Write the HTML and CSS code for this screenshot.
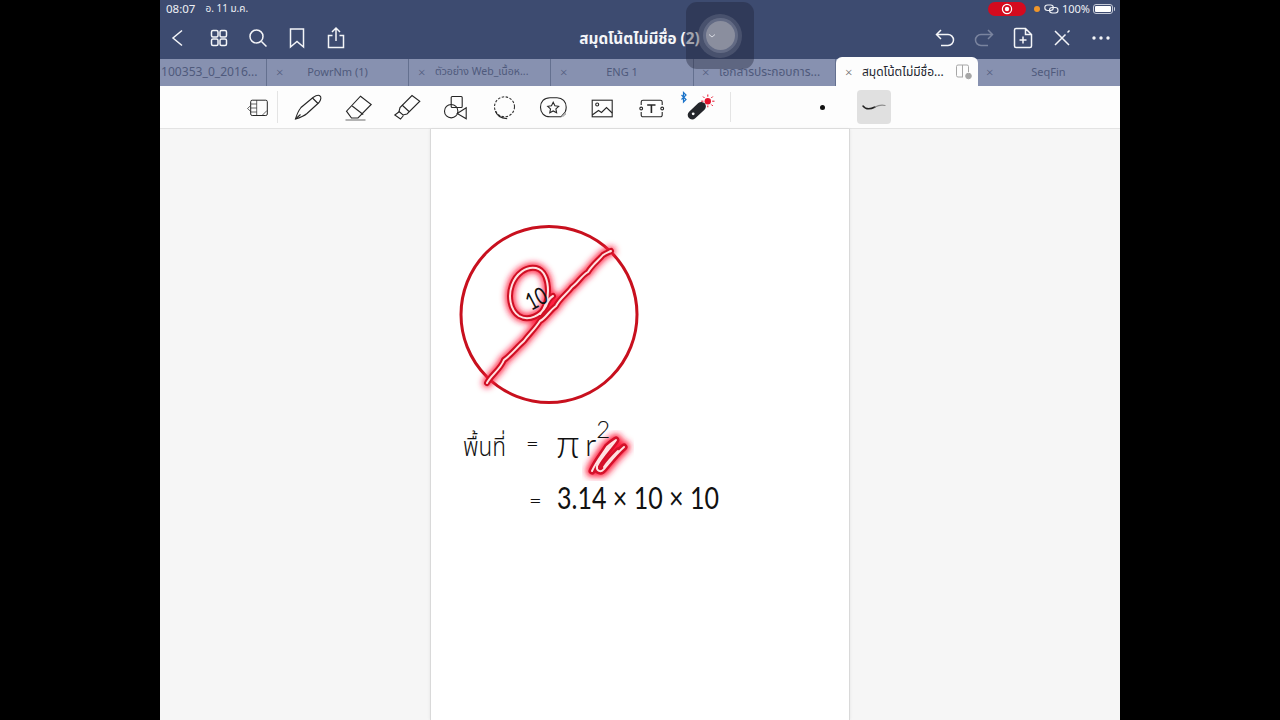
FILE: index.html
```html
<!DOCTYPE html>
<html lang="th">
<head>
<meta charset="utf-8">
<title>สมุดโน้ตไม่มีชื่อ (2)</title>
<link rel="stylesheet" href="styles.css">
</head>
<body>
<div class="app">
  <header class="header">
    <div class="status">
      <span class="time">08:07</span>
      <span class="date">อ. 11 ม.ค.</span>
      <span class="status-right">
        <span class="rec"><svg width="12" height="12" viewBox="0 0 12 12"><circle cx="6" cy="6" r="4.6" class="rec-ring"/><circle cx="6" cy="6" r="2.2" class="rec-dot"/></svg></span>
        <span class="orange"></span>
        <svg class="link" width="15" height="10" viewBox="0 0 15 10"><rect x="0.8" y="1" width="8.500" height="5.500" rx="2.700"/><rect x="5.500" y="3.500" width="8.500" height="5.500" rx="2.700"/></svg>
        <span class="pct">100%</span>
        <span class="battery"><span class="battery-fill"></span></span>
      </span>
    </div>
    <nav class="nav">
      <div class="nav-group">
        <button class="nav-btn"><svg viewBox="0 0 24 24"><path d="M14 4.500 5 12l9 7.500"/></svg></button>
        <button class="nav-btn"><svg viewBox="0 0 24 24"><rect x="4.500" y="4.500" width="6.500" height="6.500" rx="1.500"/><rect x="13" y="4.500" width="6.500" height="6.500" rx="1.500"/><rect x="4.500" y="13" width="6.500" height="6.500" rx="1.500"/><rect x="13" y="13" width="6.500" height="6.500" rx="1.500"/></svg></button>
        <button class="nav-btn"><svg viewBox="0 0 24 24"><circle cx="10.500" cy="10.500" r="6.500"/><path d="m15.500 15.500 5 5"/></svg></button>
        <button class="nav-btn"><svg viewBox="0 0 24 24"><path d="M5.500 3h13v18L12 15.500 5.500 21z"/></svg></button>
        <button class="nav-btn"><svg viewBox="0 0 24 24"><path d="M8.500 9.500H4.500v12h15v-12h-4M12 15V2.500M8 6l4-4 4 4"/></svg></button>
      </div>
      <h1 class="title">สมุดโน้ตไม่มีชื่อ (2)</h1>
      <div class="nav-group">
        <button class="nav-btn"><svg viewBox="0 0 24 24"><path d="M8 4 3.500 8.500 8 13M3.500 8.500H15a5.500 5.500 0 0 1 0 11H8"/></svg></button>
        <button class="nav-btn dim"><svg viewBox="0 0 24 24"><path d="M16 4l4.500 4.500L16 13M20.500 8.500H9a5.500 5.500 0 0 0 0 11h7"/></svg></button>
        <button class="nav-btn"><svg viewBox="0 0 24 24"><path d="M14.500 2.500H5a1.500 1.500 0 0 0-1.500 1.500v16A1.500 1.500 0 0 0 5 21.500h14a1.500 1.500 0 0 0 1.500-1.500V8.500zM14.500 2.500v6h6M12 10.500v7M8.500 14h7"/></svg></button>
        <button class="nav-btn"><svg viewBox="0 0 24 24"><path d="m5 5 14 14M5 19 15.500 8.500M17.500 6.500 19.500 4.500"/></svg></button>
        <button class="nav-btn"><svg viewBox="0 0 24 24"><circle cx="5" cy="12" r="1.700" class="fill"/><circle cx="12" cy="12" r="1.700" class="fill"/><circle cx="19" cy="12" r="1.700" class="fill"/></svg></button>
      </div>
    </nav>
  </header>

  <div class="tabs">
    <div class="tab tab-first"><span class="tab-label">100353_0_2016...</span></div>
    <div class="tab"><span class="x">×</span><span class="tab-label">PowrNm (1)</span></div>
    <div class="tab tab-left"><span class="x">×</span><span class="tab-label">ตัวอย่าง Web_เนื้อห...</span></div>
    <div class="tab tab-wide"><span class="x">×</span><span class="tab-label">ENG 1</span></div>
    <div class="tab tab-left tab-doc"><span class="x">×</span><span class="tab-label">เอกสารประกอบการ...</span></div>
    <div class="tab tab-active"><span class="x">×</span><span class="tab-label">สมุดโน้ตไม่มีชื่อ...</span>
      <svg class="split" width="18" height="16" viewBox="0 0 18 16"><path d="M8 13H3a1.500 1.500 0 0 1-1.500-1.500v-9A1.500 1.500 0 0 1 3 1h9a1.500 1.500 0 0 1 1.500 1.500V8M7.500 1v12"/><circle cx="13.500" cy="12" r="2.800" class="split-dot"/></svg>
    </div>
    <div class="tab tab-last"><span class="x">×</span><span class="tab-label">SeqFin</span></div>
  </div>

  <div class="toolbar">
    <button class="tool tool-first"><svg viewBox="0 0 24 24"><rect x="4.700" y="5.200" width="16.600" height="15.300" rx="1.500"/><path class="fine" d="M10.700 5.200v15.300M1.500 13.500l3.200-3M1.500 13.500l3.200 3M4.700 9h6M4.700 13h6M4.700 17h6M16 20.500l5-5"/></svg></button>
    <span class="divider"></span>
    <button class="tool"><svg viewBox="0 0 30 30"><path d="M1.500 27C3 22 5 18 7 15.500L19 5.500C22 3.500 25 3 26 4c1.500 1 1 4-1 6.500L13 21.500C10 24 5 26 1.500 27z"/><path d="m18.500 6 5.500 5.500M1.500 27l5-4.500"/></svg></button>
    <button class="tool"><svg viewBox="0 0 30 30"><path d="M17.500 4.200 28.200 12.500 15 26H8.500L3.500 19.200z"/><path d="m9.200 14 11 8.500"/><path class="mid" d="M2.500 28h20"/></svg></button>
    <button class="tool"><svg viewBox="0 0 30 30"><path d="M20 3.500 27.800 9.200 15 22l-4 1-4-3.500 1-4z"/><path d="M7.500 19.500 2.800 23l5.700 4 3-3.500M10 13l7 6.500"/></svg></button>
    <button class="tool"><svg viewBox="0 0 30 30"><rect x="10.200" y="4.500" width="11" height="11" rx="1"/><circle cx="10.200" cy="19.200" r="6.700"/><path d="M25.200 15.800v11L16.200 21.500z"/></svg></button>
    <button class="tool"><svg viewBox="0 0 30 30"><circle class="dash" cx="14.500" cy="14.800" r="10"/><path d="M5.500 19c1 4 5 7 11.700 7.800"/></svg></button>
    <button class="tool"><svg viewBox="0 0 30 30"><path d="M22 24.800H11C5 24.800 1.500 20.800 1.500 15.300S5 5.800 11 5.800h7c5.500 0 9.200 4 9.200 9.500 0 2-.5 3.500-1 4.700z"/><path d="m14.200 10.300 1.700 3.400 3.800.6-2.800 2.600.7 3.800-3.400-1.800-3.400 1.800.7-3.800-2.800-2.600 3.800-.6z"/><path class="gray" d="m22 24.800 5-5v2.500l-2.500 2.500z"/></svg></button>
    <button class="tool"><svg viewBox="0 0 30 30"><rect x="4.200" y="8.200" width="20" height="16.600"/><circle cx="9.200" cy="12.500" r="1.500"/><path d="m4.200 23 6.300-4.500 3 2 5-5 5.700 5.500"/></svg></button>
    <button class="tool"><svg viewBox="0 0 30 30"><path d="M4.200 13v-3a1.800 1.800 0 0 1 1.800-1.800h17.400a1.800 1.800 0 0 1 1.800 1.800v3M4.200 20v3a1.800 1.800 0 0 0 1.800 1.800h17.400a1.800 1.800 0 0 0 1.800-1.800v-3"/><path class="t" d="M10.200 13h8.300M14.400 13v8"/><circle cx="4.200" cy="16.500" r="1.400"/><circle cx="25.200" cy="16.500" r="1.400"/></svg></button>
    <button class="tool tool-laser"><svg viewBox="0 0 30 30"><path class="bt" d="m-4.500 3 4.500 4.500L-2.500 10V.5L0 3-4.500 7.500"/><rect class="laser" x="0" y="14.200" width="21.600" height="9" rx="4.500" transform="rotate(-43 10.800 18.700)"/><circle cx="7.200" cy="21.800" r="1.400" class="white-solid"/><circle class="red" cx="21.800" cy="9.200" r="3.200"/><path class="rays" d="M21.800 2.500v2.200M21.800 13.500v1.800M15.200 9.200h2.200M26.200 9.200h2.300M17 4.500l1.500 1.500M26.800 4.500l-1.500 1.500M26.800 14l-1.500-1.500"/></svg></button>
    <span class="divider divider-2"></span>
    <span class="dot"></span>
    <span class="pen-box"><svg width="26" height="14" viewBox="0 0 26 14"><path class="pen-line" d="M2 6c3 4 8 3 12 1"/><path class="pen-tail" d="M14 7c3-1.500 6-2.500 10-1.500"/></svg></span>
  </div>

  <main class="canvas">
    <section class="page">
      <svg class="ink" viewBox="431 129 418 591">
        <defs>
          <filter id="glow" x="-30%" y="-30%" width="160%" height="160%"><feGaussianBlur stdDeviation="3"/></filter>
          <g id="neon-strokes">
            <path d="M487 383c4-8 13-13 17-23 8-6 13-13 20-19 5-7 11-12 16-20 6-3 9-10 16-15 4-8 11-12 16-19 6-4 9-11 16-15 4-7 11-12 15-17 3-2 6-3 8-4"/>
            <path d="M553 296c-4 2-5 5-7 10-5 9-17 16-27 10-9-6-11-20-7-31 4-11 14-19 24-17 9 2 12 13 12 23 0 8-2 16-8 23"/>
          </g>
          <g id="scribble">
            <path d="M592 471c4-9 10-16 15-24 3-3 6-5 9-7-6 9-14 16-19 26-1 5 4 7 7 3 6-7 12-15 20-22"/>
            <path d="M597 463c5-7 8-12 13-17M604 467c4-6 9-11 14-16"/>
          </g>
        </defs>
        <circle class="ring" cx="549" cy="314.500" r="88"/>
        <use href="#neon-strokes" class="neon-glow" filter="url(#glow)"/>
        <use href="#scribble" class="scribble-glow" filter="url(#glow)"/>
        <use href="#neon-strokes" class="neon-mid"/>
        <use href="#scribble" class="scribble-mid"/>
        <use href="#neon-strokes" class="neon-core"/>
        <use href="#scribble" class="neon-core"/>
        <g>
          <text class="hw hw-10" transform="translate(531 311) rotate(-28)" textLength="21" lengthAdjust="spacingAndGlyphs">10</text>
          <text class="hw hw-area" x="463" y="456" textLength="43" lengthAdjust="spacingAndGlyphs">พื้นที่</text>
          <text class="hw hw-eq" x="526" y="451">=</text>
          <text class="hw hw-pi" x="556" y="458">π</text>
          <text class="hw hw-r" x="585" y="456">r<tspan class="hw-sq" dy="-18">2</tspan></text>
          <text class="hw hw-eq" x="529" y="508">=</text>
          <text class="hw hw-calc" x="557" y="509" textLength="162" lengthAdjust="spacingAndGlyphs">3.14 × 10 × 10</text>
        </g>
      </svg>
    </section>
  </main>

  <div class="float-btn"><span class="float-halo"><span class="float-core"><svg class="float-chev" width="8" height="6" viewBox="0 0 8 6"><path d="m1 1.500 3 2.500 3-2.500"/></svg></span></span></div>
</div>
</body>
</html>
```
FILE: styles.css
```css
* { box-sizing: border-box; }
html, body { margin: 0; height: 100%; background: #000; overflow: hidden; }
body { font-family: "Noto Sans", "Noto Sans Thai", "Liberation Sans", sans-serif; }
.app { position: relative; width: 960px; height: 720px; margin: 0 auto; background: #f6f6f6; display: flex; flex-direction: column; overflow: hidden; }

.header { background: #3d4b70; color: #fff; height: 59px; flex: none; }
.status { height: 17px; display: flex; align-items: center; padding: 0 7px 0 6px; font-size: 11.500px; color: #eef0f5; }
.date { margin-left: 10px; font-size: 10px; }
.status-right { margin-left: auto; display: flex; align-items: center; }
.rec { width: 38px; height: 14px; border-radius: 7px; background: #d40a1e; display: flex; align-items: center; justify-content: center; }
.rec-ring { fill: none; stroke: #fff; stroke-width: 1.200; }
.rec-dot { fill: #fff; }
.orange { width: 6px; height: 6px; border-radius: 50%; background: #f0962a; margin-left: 8px; }
.link { margin-left: 4px; fill: none; stroke: #eef0f5; stroke-width: 1.100; }
.pct { margin-left: 3px; font-size: 11px; }
.battery { position: relative; width: 20px; height: 10px; margin-left: 3px; border: 1px solid #c5cad8; border-radius: 3px; padding: 1px; }
.battery::after { content: ""; position: absolute; right: -3px; top: 2px; width: 1.500px; height: 4px; background: #c5cad8; border-radius: 0 1px 1px 0; }
.battery-fill { display: block; height: 100%; background: #fff; border-radius: 1px; }

.nav { height: 42px; display: grid; grid-template-columns: 1fr auto 1fr; align-items: center; }
.nav-group { display: flex; }
.nav-group:last-child { justify-content: flex-end; }
.nav-btn { width: 39px; height: 42px; padding: 0; border: 0; background: none; display: flex; align-items: center; justify-content: center; }
.nav-btn svg { width: 24px; height: 24px; fill: none; stroke: #f4f5f8; stroke-width: 1.500; }
.nav-btn .fill { fill: #f4f5f8; stroke: none; }
.nav-btn.dim svg { stroke: #7a849f; }
.title { margin: 0 0 0 -1px; font-size: 15.300px; font-weight: 700; color: #f5f6f9; white-space: nowrap; line-height: 42px; }

.tabs { height: 27px; flex: none; display: flex; background: #8791b0; position: relative; }
.tab { flex: 0 0 142px; height: 27px; display: flex; align-items: center; font-size: 11px; color: #4f5a7c; border-right: 1px solid #64708f; padding-left: 9px; padding-bottom: 2px; white-space: nowrap; overflow: hidden; }
.tab-wide { flex-basis: 143px; }
.tab-first { flex-basis: 107px; padding-left: 1px; font-size: 12.100px; }
.tab-last { flex-basis: 141px; border-right: 0; padding-left: 7px; }
.x { font-size: 13px; width: 17px; flex: none; font-weight: 300; }
.tab-label { flex: 1; text-align: center; overflow: hidden; padding-right: 26px; }
.tab-first .tab-label { padding-right: 0; text-align: left; }
.tab-left .tab-label { text-align: left; padding: 0; }
.tab-left { font-size: 10.500px; }
.tab-doc { font-size: 12px; padding-left: 8px; }
.tab-active { margin-top: -2px; height: 29px; background: #fdfdfd; color: #22252e; border-right: 0; border-radius: 6px 6px 0 0; margin-right: 1px; font-size: 12px; padding-left: 9px; padding-bottom: 0; position: relative; }
.tab-active .tab-label { text-align: left; flex: none; width: 88px; padding: 0; }
.tab-active .x { color: #666; }
.split { position: absolute; right: 5px; top: 7px; fill: none; stroke: #a7a7a7; stroke-width: 1; }
.split-dot { fill: #a7a7a7; }

.toolbar { height: 43px; flex: none; background: #fdfdfd; border-bottom: 1px solid #e3e3e3; display: flex; align-items: center; padding-left: 81px; }
.tool { width: 49px; height: 42px; padding: 0; border: 0; background: none; display: flex; align-items: center; justify-content: center; flex: none; }
.tool svg { width: 30px; height: 30px; fill: none; stroke: #262626; stroke-width: 1.100; overflow: visible; }
.tool-first { width: 34px; margin-right: 2px; }
.tool-first svg { width: 24px; height: 24px; stroke-width: 1; }
.tool .fine { stroke-width: .7; }
.tool .mid { stroke: #777; }
.divider { width: 1px; height: 32px; background: #e4e4e4; flex: none; margin-right: 6px; }
.divider-2 { margin: 0 0 0 5px; height: 30px; }
.tool .dash { stroke-dasharray: 2.500 1.500; stroke: #333; }
.tool .gray { fill: #b5b5b5; stroke: none; }
.tool .t { stroke-width: 1.600; }
.tool .white-solid { fill: #fff; stroke: none; }
.tool .laser { fill: #24262b; stroke: none; }
.tool .red { fill: #e5132d; stroke: none; }
.tool .rays { stroke: #e5132d; stroke-width: 1; }
.tool .bt { stroke: #1b73c9; stroke-width: 1.200; }
.dot { width: 5px; height: 5px; border-radius: 50%; background: #111; margin-left: 89px; flex: none; }
.pen-box { width: 34px; height: 34px; margin-left: 32px; background: #e0e0e0; border-radius: 4px; display: flex; align-items: center; justify-content: center; flex: none; }
.pen-line { fill: none; stroke: #222; stroke-width: 1.500; stroke-linecap: round; }
.pen-tail { fill: none; stroke: #8c8c8c; stroke-width: 1.200; stroke-linecap: round; }

.canvas { flex: 1; min-height: 0; display: flex; justify-content: center; }
.page { width: 420px; height: 100%; background: #fff; border-left: 1px solid #d9d9d9; border-right: 1px solid #d9d9d9; box-shadow: 0 0 3px rgba(0,0,0,.08); }
.ink { display: block; width: 418px; height: 591px; }
.ring { fill: none; stroke: #c8101e; stroke-width: 3; }
.neon-glow, .neon-mid, .neon-core, .scribble-glow, .scribble-mid { fill: none; stroke-linecap: round; stroke-linejoin: round; }
.neon-glow { stroke: #ff1f3d; stroke-width: 9; }
.scribble-glow { stroke: #ff1f3d; stroke-width: 12; }
.neon-mid { stroke: #cf1024; stroke-width: 6; }
.scribble-mid { stroke: #d4112a; stroke-width: 7; }
.neon-core { stroke: #ffe3e3; stroke-width: 2; }
.hw { font-family: "Lato", "Noto Sans", sans-serif; font-weight: 300; fill: #111; }
.hw-10 { font-size: 24px; font-weight: 400; }
.hw-area { font-size: 26px; font-family: "Noto Sans", "Noto Sans Thai", sans-serif; }
.hw-eq { font-size: 22px; }
.hw-pi { font-size: 40px; }
.hw-r { font-size: 32px; }
.hw-sq { font-size: 24px; }
.hw-calc { font-size: 31px; font-weight: 400; }

.float-btn { position: absolute; left: 526px; top: 2px; width: 68px; height: 67px; border-radius: 11px; background: rgba(30,32,52,.38); display: flex; align-items: center; justify-content: center; }
.float-halo { width: 44px; height: 44px; border-radius: 50%; background: rgba(130,135,155,.3); display: flex; align-items: center; justify-content: center; }
.float-core { width: 29px; height: 29px; border-radius: 50%; background: #8a8e9e; box-shadow: 0 0 0 3px rgba(150,155,175,.35); display: flex; align-items: center; justify-content: flex-start; overflow: visible; }
.float-chev { margin-left: 2px; fill: none; stroke: #d8dae2; stroke-width: 1; overflow: visible; flex: none; }
```
